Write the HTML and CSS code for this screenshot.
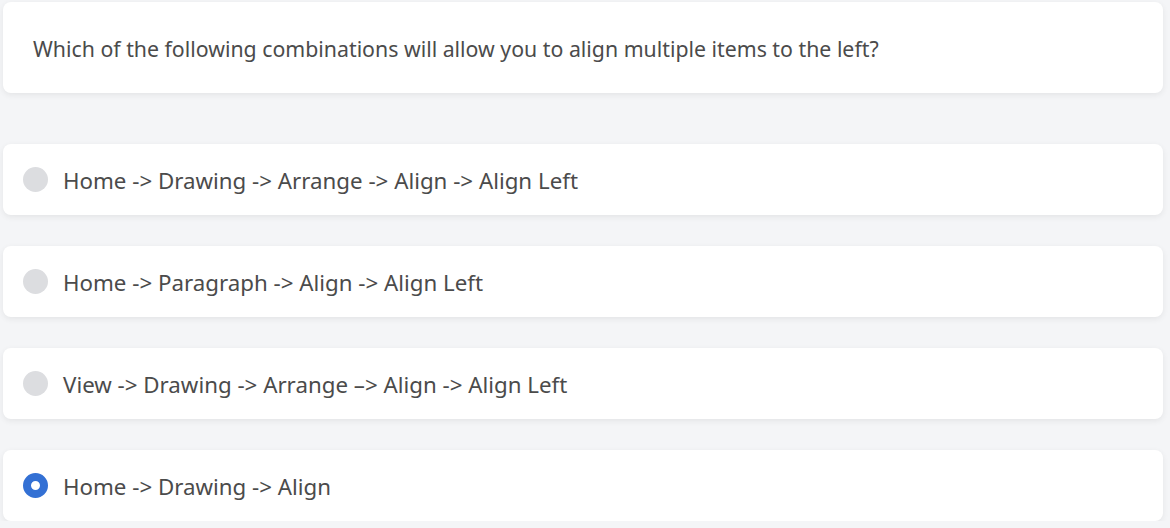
FILE: index.html
```html
<!DOCTYPE html>
<html>
<head>
<meta charset="utf-8">
<link rel="stylesheet" href="styles.css">
</head>
<body>
<div class="page">
  <div class="card question">Which of the following combinations will allow you to align multiple items to the left?</div>
  <div class="options">
    <div class="card option"><span class="radio"></span><span class="label">Home -&gt; Drawing -&gt; Arrange -&gt; Align -&gt; Align Left</span></div>
    <div class="card option"><span class="radio"></span><span class="label">Home -&gt; Paragraph -&gt; Align -&gt; Align Left</span></div>
    <div class="card option"><span class="radio"></span><span class="label">View -&gt; Drawing -&gt; Arrange –&gt; Align -&gt; Align Left</span></div>
    <div class="card option"><span class="radio checked"></span><span class="label">Home -&gt; Drawing -&gt; Align</span></div>
  </div>
</div>
</body>
</html>
```
FILE: styles.css
```css
html, body {
  margin: 0;
  padding: 0;
  background: #f4f5f7;
}
body {
  font-family: "Noto Sans", "Open Sans", sans-serif;
  color: #4b4b4b;
}
.page {
  padding: 2px 7px 0 3px;
}
.card {
  background: #ffffff;
  border-radius: 8px;
  box-shadow: 0 2px 6px rgba(0, 0, 0, 0.07);
}
.question {
  height: 91px;
  box-sizing: border-box;
  padding: 2px 30px 0;
  display: flex;
  align-items: center;
  font-size: 21.3px;
}
.options {
  margin-top: 51px;
  display: flex;
  flex-direction: column;
  gap: 31px;
}
.option {
  height: 71px;
  box-sizing: border-box;
  display: flex;
  align-items: center;
  padding-left: 20px;
  font-size: 22.3px;
}
.label {
  padding-top: 2px;
}
.radio {
  width: 25px;
  height: 25px;
  border-radius: 50%;
  background: #dcdde0;
  flex: none;
  margin-right: 15px;
  box-sizing: border-box;
}
.radio.checked {
  background: #ffffff;
  border: 8px solid #3370d4;
}
```
